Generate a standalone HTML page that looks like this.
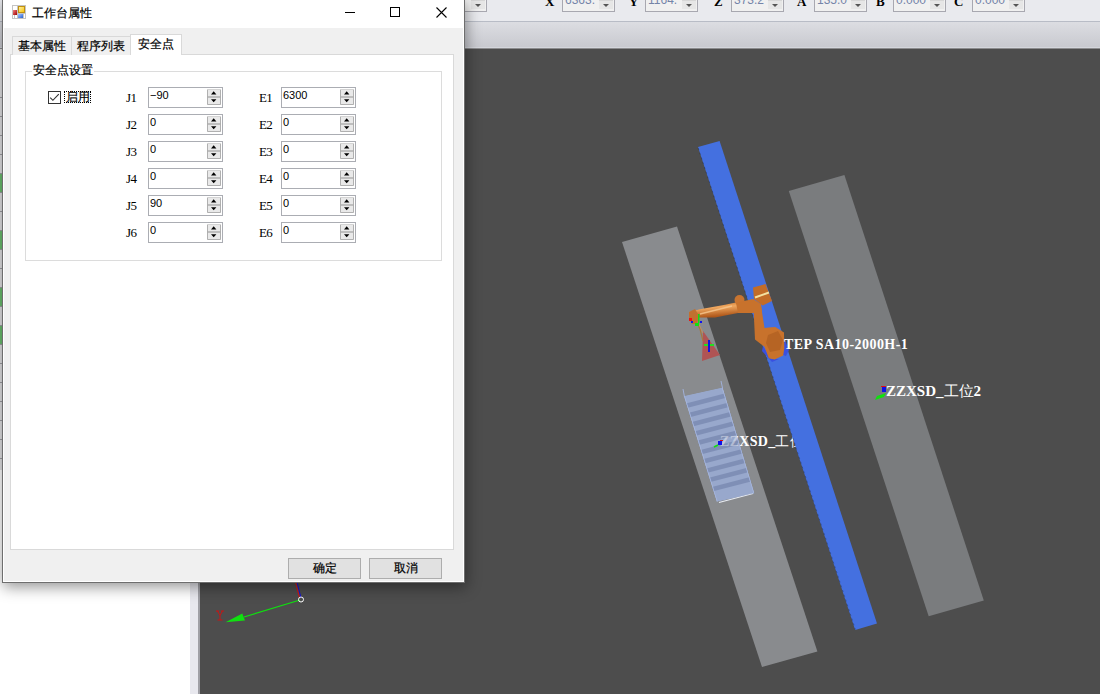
<!DOCTYPE html>
<html><head><meta charset="utf-8"><style>
*{margin:0;padding:0;box-sizing:border-box}
html,body{width:1100px;height:694px;overflow:hidden;background:#fff;font-family:"Liberation Sans",sans-serif;font-size:12px;color:#000}
.a{position:absolute}
.lbl{font-family:"Liberation Serif",serif;font-weight:bold;font-size:13px;color:#000;line-height:13px}
.combo{height:12px;top:0;border:1px solid #a8a8b0;border-top:none;background:#f0f0f0;width:53px;overflow:hidden}
.combo .t{position:absolute;left:2px;top:-6px;font-size:12px;line-height:13px;color:#7484a8}
.combo .btn{position:absolute;right:1px;top:0;width:14px;height:9px;background:#e6e6e6;border-top:1px solid #d6d6d6}
.combo .btn:after{content:"";position:absolute;left:4px;top:3px;border-left:3px solid transparent;border-right:3px solid transparent;border-top:3px solid #555}
.cj{font-size:12px;line-height:14px;white-space:nowrap;-webkit-text-stroke:0.2px #000}
.tab{top:36px;height:19px;border:1px solid #d9d9d9;border-bottom:none;background:#f0f0f0;text-align:center;line-height:19px}
.jl{font-family:"Liberation Serif",serif;font-size:13px;line-height:12px;letter-spacing:-0.6px}
.spin{width:75px;height:21px;border:1px solid #abadb3;background:#fff}
.spin .v{position:absolute;left:1px;top:1px;font-size:11px;line-height:13px}
.spin svg{position:absolute;left:-1px;top:-1px}
.btn2{width:73px;height:21px;border:1px solid #adadad;background:#e1e1e1;text-align:center;line-height:19px}
.w3{font-family:"Liberation Serif",serif;font-weight:bold;color:#fff;white-space:nowrap;line-height:16px}
</style></head><body>
<div class="a" style="left:0;top:0;width:190px;height:694px;background:#fff"></div>
<div class="a" style="left:0;top:0;width:2px;height:470px;background:#e4e4e6"></div>
<div class="a" style="left:0;top:97px;width:2px;height:1px;background:#a0a0a4"></div>
<div class="a" style="left:0;top:116px;width:2px;height:1px;background:#a0a0a4"></div>
<div class="a" style="left:0;top:135px;width:2px;height:1px;background:#a0a0a4"></div>
<div class="a" style="left:0;top:154px;width:2px;height:1px;background:#a0a0a4"></div>
<div class="a" style="left:0;top:173px;width:2px;height:1px;background:#a0a0a4"></div>
<div class="a" style="left:0;top:192px;width:2px;height:1px;background:#a0a0a4"></div>
<div class="a" style="left:0;top:211px;width:2px;height:1px;background:#a0a0a4"></div>
<div class="a" style="left:0;top:230px;width:2px;height:1px;background:#a0a0a4"></div>
<div class="a" style="left:0;top:249px;width:2px;height:1px;background:#a0a0a4"></div>
<div class="a" style="left:0;top:268px;width:2px;height:1px;background:#a0a0a4"></div>
<div class="a" style="left:0;top:287px;width:2px;height:1px;background:#a0a0a4"></div>
<div class="a" style="left:0;top:306px;width:2px;height:1px;background:#a0a0a4"></div>
<div class="a" style="left:0;top:325px;width:2px;height:1px;background:#a0a0a4"></div>
<div class="a" style="left:0;top:344px;width:2px;height:1px;background:#a0a0a4"></div>
<div class="a" style="left:0;top:363px;width:2px;height:1px;background:#a0a0a4"></div>
<div class="a" style="left:0;top:382px;width:2px;height:1px;background:#a0a0a4"></div>
<div class="a" style="left:0;top:401px;width:2px;height:1px;background:#a0a0a4"></div>
<div class="a" style="left:0;top:420px;width:2px;height:1px;background:#a0a0a4"></div>
<div class="a" style="left:0;top:439px;width:2px;height:1px;background:#a0a0a4"></div>
<div class="a" style="left:0;top:458px;width:2px;height:1px;background:#a0a0a4"></div>
<div class="a" style="left:0;top:174px;width:2px;height:18px;background:#6cc070"></div>
<div class="a" style="left:0;top:231px;width:2px;height:18px;background:#6cc070"></div>
<div class="a" style="left:0;top:288px;width:2px;height:18px;background:#6cc070"></div>
<div class="a" style="left:0;top:326px;width:2px;height:18px;background:#6cc070"></div>
<div class="a" style="left:0;top:0;width:1100px;height:21px;background:#e9eaee"></div>
<div class="a" style="left:0;top:21px;width:1100px;height:1px;background:#b8bcc6"></div>
<div class="a" style="left:0;top:22px;width:1100px;height:27px;background:linear-gradient(#dcdde2,#c7c8ce)"></div>
<div class="a" style="left:0;top:47px;width:1100px;height:1px;background:#d4d6dc"></div>
<div class="a" style="left:0;top:48px;width:1100px;height:1px;background:#8c8c8e"></div>
<div class="a" style="left:190px;top:49px;width:8px;height:645px;background:#e8e8ee"></div>
<div class="a" style="left:198px;top:49px;width:2px;height:645px;background:#a0a0a6"></div>
<div class="a combo" style="left:434px;"><div class="t">0</div><div class="btn"></div></div>
<div class="a lbl" style="left:545px;top:-5px">X</div>
<div class="a combo" style="left:562px;"><div class="t">6363.</div><div class="btn"></div></div>
<div class="a lbl" style="left:629px;top:-5px">Y</div>
<div class="a combo" style="left:645px;"><div class="t">1164.</div><div class="btn"></div></div>
<div class="a lbl" style="left:714px;top:-5px">Z</div>
<div class="a combo" style="left:731px;"><div class="t">373.2</div><div class="btn"></div></div>
<div class="a lbl" style="left:797px;top:-5px">A</div>
<div class="a combo" style="left:814px;"><div class="t">135.0</div><div class="btn"></div></div>
<div class="a lbl" style="left:876px;top:-5px">B</div>
<div class="a combo" style="left:893px;"><div class="t">0.000</div><div class="btn"></div></div>
<div class="a lbl" style="left:954px;top:-5px">C</div>
<div class="a combo" style="left:972px;"><div class="t">0.000</div><div class="btn"></div></div>
<div class="a" style="left:200px;top:49px;width:900px;height:645px;background:#4d4d4d;overflow:hidden">
<svg width="900" height="645" viewBox="200 49 900 645" style="position:absolute;left:0;top:0">

<polygon points="622,242 677,226.5 817.4,651.5 762,667" fill="#898b8e"/>
<polygon points="788.8,191 844.4,175 983.8,600.6 928.7,616.3" fill="#7a7c7e"/>
<clipPath id="shc"><polygon points="684,396 722.5,387.5 754.3,493.4 716.9,501.8"/></clipPath>
<g id="shelfg" clip-path="url(#shc)">
<polygon points="684,396 722.5,387.5 754.3,493.4 716.9,501.8" fill="#98a8cc"/>
<line x1="677.0" y1="408.2" x2="757.0" y2="387.4" stroke="#7f8fb6" stroke-width="4.5"/>
<line x1="679.9" y1="417.5" x2="759.9" y2="396.7" stroke="#7f8fb6" stroke-width="4.5"/>
<line x1="682.8" y1="426.7" x2="762.8" y2="405.9" stroke="#7f8fb6" stroke-width="4.5"/>
<line x1="685.6" y1="436.0" x2="765.6" y2="415.2" stroke="#7f8fb6" stroke-width="4.5"/>
<line x1="688.5" y1="445.3" x2="768.5" y2="424.5" stroke="#7f8fb6" stroke-width="4.5"/>
<line x1="691.4" y1="454.6" x2="771.4" y2="433.8" stroke="#7f8fb6" stroke-width="4.5"/>
<line x1="694.3" y1="463.8" x2="774.3" y2="443.0" stroke="#7f8fb6" stroke-width="4.5"/>
<line x1="697.2" y1="473.1" x2="777.2" y2="452.3" stroke="#7f8fb6" stroke-width="4.5"/>
<line x1="700.0" y1="482.4" x2="780.0" y2="461.6" stroke="#7f8fb6" stroke-width="4.5"/>
<line x1="702.9" y1="491.6" x2="782.9" y2="470.8" stroke="#7f8fb6" stroke-width="4.5"/>
<line x1="684" y1="396" x2="716.9" y2="501.8" stroke="#a8b8e0" stroke-width="1.5"/>
<line x1="722.5" y1="387.5" x2="754.3" y2="493.4" stroke="#a8b8e0" stroke-width="1.5"/>
</g>
<line x1="719" y1="502.5" x2="753" y2="493.5" stroke="#e8ecf4" stroke-width="1.2"/>
<line x1="683" y1="389" x2="684.5" y2="397" stroke="#a0b0d8" stroke-width="1"/>
<line x1="721" y1="381" x2="722.5" y2="388" stroke="#a0b0d8" stroke-width="1"/>
<text x="720" y="446" font-family="Liberation Serif" font-weight="bold" font-size="14" letter-spacing="0.3" fill="#fff">ZZXSD_<tspan font-weight="normal">工位</tspan>1</text>
<use href="#shelfg" opacity="0.6"/>
<polygon points="698,147 719.6,141 877,623.6 855.2,630" fill="#4470e0"/>
<line x1="698.2" y1="148" x2="855.4" y2="629.5" stroke="#101830" stroke-width="0.7" stroke-dasharray="2 3" opacity="0.45"/>
<!-- small axes on shelf -->
<rect x="718" y="441" width="4" height="4" fill="#1010e8"/>
<rect x="720" y="440" width="3" height="1" fill="#e01010"/>
<line x1="718" y1="445" x2="714" y2="447" stroke="#10e010" stroke-width="1.6"/>
<!-- axes at station 2 -->
<rect x="882" y="387" width="4" height="5" fill="#1010e8"/>
<rect x="881" y="386" width="5" height="1" fill="#e01010"/>
<path d="M886 393L877 396L875 400L884 397Z" fill="#10e010"/>
<!-- robot -->
<defs>
<linearGradient id="fa" x1="0" y1="0" x2="0.25" y2="1"><stop offset="0" stop-color="#b8621e"/><stop offset="0.45" stop-color="#f0a860"/><stop offset="1" stop-color="#b0581a"/></linearGradient>
</defs>
<polygon points="703,331 720,355 702,361" fill="#b05454"/>
<path d="M694 318L700 329L703 341" stroke="#a8783c" stroke-width="1.2" fill="none"/>
<path d="M697 320L703 333" stroke="#c09060" stroke-width="1" fill="none"/>
<line x1="704" y1="345" x2="714" y2="345" stroke="#20e020" stroke-width="2"/>
<line x1="709" y1="340" x2="709" y2="352" stroke="#1010e0" stroke-width="2"/>
<polygon points="763,346 771,359 779,359 772,362 762,351" fill="#3a50e0"/>
<polygon points="784,338 789,350 786,356 783,355" fill="#3a50e0"/>
<polygon points="753.7,312 761,306 764.5,328 768.8,327.4 775.3,327 784,332.4 784.3,348.3 783.2,355.5 774.6,359.4 768.8,358.3 764.5,346.8 755,339.6" fill="#c8722c"/>
<polygon points="768,335 778,331 783,340 780,350 770,352 766,343" fill="#b66424"/>
<polygon points="689,312 700,309.2 725,304.7 738,302 738,313 715,317.5 692,317.5" fill="url(#fa)"/>
<line x1="700" y1="314" x2="732" y2="306" stroke="#f8c890" stroke-width="1.3" opacity="0.8"/>
<circle cx="739.5" cy="300" r="5" fill="#c87430"/>
<polygon points="736,303 744,301 753,299 761,304 762,313 752,313 738,313" fill="#c8722c"/>
<polygon points="753,287.4 765.5,284.1 772,301 762.7,305.4 754,299" fill="#c26c28"/>
<line x1="755" y1="297.5" x2="769" y2="292.5" stroke="#f4e0a0" stroke-width="2"/>
<polygon points="689,312 695,309 699,316 697,324 692,324 689,318" fill="#c07030"/>
<rect x="689" y="318" width="3" height="3" fill="#f01010"/>
<rect x="691" y="321" width="2" height="2" fill="#1010f0"/>
<rect x="698" y="314" width="1.5" height="9" fill="#10e010"/>
<rect x="695" y="323" width="4" height="3" fill="#10e010"/>
<rect x="700" y="321" width="2" height="2" fill="#1010f0"/>
<text x="784" y="349" font-family="Liberation Serif" font-weight="bold" font-size="14" letter-spacing="0.45" fill="#fff">TEP SA10-2000H-1</text>
<text x="886" y="396" font-family="Liberation Serif" font-weight="bold" font-size="15" fill="#fff">ZZXSD_<tspan font-weight="normal">工位</tspan>2</text>
<!-- world axes -->
<line x1="301" y1="598" x2="296.5" y2="580" stroke="#1010e0" stroke-width="1"/>
<line x1="299.5" y1="598" x2="295" y2="580" stroke="#e01010" stroke-width="1"/>
<line x1="300" y1="600" x2="244" y2="617" stroke="#10e010" stroke-width="1.2"/>
<polygon points="225.5,622.3 242.3,613.6 245,620.5" fill="#10e010"/>
<circle cx="301" cy="599.5" r="2.5" fill="none" stroke="#fff" stroke-width="1"/>
<path d="M216 611H219M221 611H224M217.5 611L220 615.5L222.5 611M220 615.5V620M217.5 620H222.5" stroke="#c81414" stroke-width="1" fill="none"/>

</svg></div>

<div class="a" style="left:2px;top:-1px;width:463px;height:584px;border:1px solid #6e6e6e;background:#f0f0f0;box-shadow:1px 4px 14px rgba(0,0,0,0.42)"></div>
<div class="a" style="left:3px;top:0;width:461px;height:28px;background:#fff"></div>
<div class="a" style="left:3px;top:28px;width:1px;height:553px;background:#fff"></div>
<div class="a" style="left:3px;top:581px;width:461px;height:1px;background:#fff"></div>
<div class="a" style="left:463px;top:28px;width:1px;height:553px;background:#fff"></div>
<svg class="a" style="left:12px;top:5px" width="14" height="14" viewBox="0 0 14 14">
  <rect x="0.5" y="0.5" width="13" height="13" fill="#fff" stroke="#c4c4c4"/>
  <line x1="5.5" y1="0" x2="5.5" y2="14" stroke="#c4c4c4"/>
  <line x1="0" y1="8.5" x2="14" y2="8.5" stroke="#c4c4c4"/>
  <defs><linearGradient id="ig" x1="0" y1="0" x2="1" y2="1"><stop offset="0" stop-color="#fff4b0"/><stop offset="1" stop-color="#f8c000"/></linearGradient>
  <linearGradient id="ib" x1="0" y1="0" x2="1" y2="1"><stop offset="0" stop-color="#a8c8ff"/><stop offset="1" stop-color="#2860d0"/></linearGradient>
  <linearGradient id="ir" x1="0" y1="0" x2="1" y2="1"><stop offset="0" stop-color="#f08080"/><stop offset="1" stop-color="#a00000"/></linearGradient></defs>
  <line x1="2.5" y1="9" x2="2.5" y2="14" stroke="#c4c4c4"/>
  <line x1="11.5" y1="9" x2="11.5" y2="14" stroke="#c4c4c4"/>
  <rect x="6.5" y="1.5" width="6" height="6" fill="url(#ig)" stroke="#c09010" stroke-width="1"/>
  <rect x="1" y="5" width="4" height="5" fill="url(#ir)"/>
  <rect x="6" y="9" width="5" height="4" fill="url(#ib)"/>
</svg>
<div class="a cj" style="left:32px;top:6px;">工作台属性</div>
<div class="a" style="left:345px;top:12px;width:10px;height:1px;background:#000"></div>
<div class="a" style="left:390px;top:7px;width:10px;height:10px;border:1px solid #000"></div>
<svg class="a" style="left:436px;top:7px" width="11" height="11" viewBox="0 0 11 11"><path d="M0.5 0.5L10.5 10.5M10.5 0.5L0.5 10.5" stroke="#000" stroke-width="1.1"/></svg>
<div class="a" style="left:10px;top:54px;width:444px;height:496px;border:1px solid #d9d9d9;background:#fff"></div>
<div class="a tab cj" style="left:12px;width:60px">基本属性</div>
<div class="a tab cj" style="left:71px;width:60px">程序列表</div>
<div class="a tab cj" style="left:130px;top:34px;height:21px;width:52px;background:#fff">安全点</div>
<div class="a" style="left:25px;top:71px;width:417px;height:190px;border:1px solid #dcdcdc"></div>
<div class="a cj" style="left:32px;top:63px;background:#fff;padding:0 1px;line-height:14px">安全点设置</div>
<div class="a" style="left:48px;top:91px;width:13px;height:13px;border:1px solid #333;background:#fff"></div>
<svg class="a" style="left:48px;top:91px" width="13" height="13" viewBox="0 0 13 13"><path d="M2.2 6.6L4.9 9.3L10.8 3.2" fill="none" stroke="#333" stroke-width="1.15"/></svg>
<div class="a" style="left:64px;top:91px;width:27px;height:12px;border:1px dotted #000"></div>
<div class="a cj" style="left:66px;top:90px;line-height:14px">启用</div>
<div class="a jl" style="left:126px;top:92px">J1</div>
<div class="a spin" style="left:148px;top:87px"><div class="v">−90</div><svg width="75" height="21" viewBox="0 0 75 21"><rect x="59" y="2" width="14" height="16" fill="#e9e9e9"/><path d="M59.5 2V17.5H72.5V2" fill="none" stroke="#b0b0b0"/><path d="M59 2.5H73" stroke="#d4d4d4"/><path d="M59 10H73" stroke="#acacac" stroke-width="1.4"/><path d="M63 7.4H68.4L65.7 4.2Z" fill="#000"/><path d="M63 12.2H68.4L65.7 15.2Z" fill="#000"/></svg></div>
<div class="a jl" style="left:259px;top:92px">E1</div>
<div class="a spin" style="left:281px;top:87px"><div class="v">6300</div><svg width="75" height="21" viewBox="0 0 75 21"><rect x="59" y="2" width="14" height="16" fill="#e9e9e9"/><path d="M59.5 2V17.5H72.5V2" fill="none" stroke="#b0b0b0"/><path d="M59 2.5H73" stroke="#d4d4d4"/><path d="M59 10H73" stroke="#acacac" stroke-width="1.4"/><path d="M63 7.4H68.4L65.7 4.2Z" fill="#000"/><path d="M63 12.2H68.4L65.7 15.2Z" fill="#000"/></svg></div>
<div class="a jl" style="left:126px;top:119px">J2</div>
<div class="a spin" style="left:148px;top:114px"><div class="v">0</div><svg width="75" height="21" viewBox="0 0 75 21"><rect x="59" y="2" width="14" height="16" fill="#e9e9e9"/><path d="M59.5 2V17.5H72.5V2" fill="none" stroke="#b0b0b0"/><path d="M59 2.5H73" stroke="#d4d4d4"/><path d="M59 10H73" stroke="#acacac" stroke-width="1.4"/><path d="M63 7.4H68.4L65.7 4.2Z" fill="#000"/><path d="M63 12.2H68.4L65.7 15.2Z" fill="#000"/></svg></div>
<div class="a jl" style="left:259px;top:119px">E2</div>
<div class="a spin" style="left:281px;top:114px"><div class="v">0</div><svg width="75" height="21" viewBox="0 0 75 21"><rect x="59" y="2" width="14" height="16" fill="#e9e9e9"/><path d="M59.5 2V17.5H72.5V2" fill="none" stroke="#b0b0b0"/><path d="M59 2.5H73" stroke="#d4d4d4"/><path d="M59 10H73" stroke="#acacac" stroke-width="1.4"/><path d="M63 7.4H68.4L65.7 4.2Z" fill="#000"/><path d="M63 12.2H68.4L65.7 15.2Z" fill="#000"/></svg></div>
<div class="a jl" style="left:126px;top:146px">J3</div>
<div class="a spin" style="left:148px;top:141px"><div class="v">0</div><svg width="75" height="21" viewBox="0 0 75 21"><rect x="59" y="2" width="14" height="16" fill="#e9e9e9"/><path d="M59.5 2V17.5H72.5V2" fill="none" stroke="#b0b0b0"/><path d="M59 2.5H73" stroke="#d4d4d4"/><path d="M59 10H73" stroke="#acacac" stroke-width="1.4"/><path d="M63 7.4H68.4L65.7 4.2Z" fill="#000"/><path d="M63 12.2H68.4L65.7 15.2Z" fill="#000"/></svg></div>
<div class="a jl" style="left:259px;top:146px">E3</div>
<div class="a spin" style="left:281px;top:141px"><div class="v">0</div><svg width="75" height="21" viewBox="0 0 75 21"><rect x="59" y="2" width="14" height="16" fill="#e9e9e9"/><path d="M59.5 2V17.5H72.5V2" fill="none" stroke="#b0b0b0"/><path d="M59 2.5H73" stroke="#d4d4d4"/><path d="M59 10H73" stroke="#acacac" stroke-width="1.4"/><path d="M63 7.4H68.4L65.7 4.2Z" fill="#000"/><path d="M63 12.2H68.4L65.7 15.2Z" fill="#000"/></svg></div>
<div class="a jl" style="left:126px;top:173px">J4</div>
<div class="a spin" style="left:148px;top:168px"><div class="v">0</div><svg width="75" height="21" viewBox="0 0 75 21"><rect x="59" y="2" width="14" height="16" fill="#e9e9e9"/><path d="M59.5 2V17.5H72.5V2" fill="none" stroke="#b0b0b0"/><path d="M59 2.5H73" stroke="#d4d4d4"/><path d="M59 10H73" stroke="#acacac" stroke-width="1.4"/><path d="M63 7.4H68.4L65.7 4.2Z" fill="#000"/><path d="M63 12.2H68.4L65.7 15.2Z" fill="#000"/></svg></div>
<div class="a jl" style="left:259px;top:173px">E4</div>
<div class="a spin" style="left:281px;top:168px"><div class="v">0</div><svg width="75" height="21" viewBox="0 0 75 21"><rect x="59" y="2" width="14" height="16" fill="#e9e9e9"/><path d="M59.5 2V17.5H72.5V2" fill="none" stroke="#b0b0b0"/><path d="M59 2.5H73" stroke="#d4d4d4"/><path d="M59 10H73" stroke="#acacac" stroke-width="1.4"/><path d="M63 7.4H68.4L65.7 4.2Z" fill="#000"/><path d="M63 12.2H68.4L65.7 15.2Z" fill="#000"/></svg></div>
<div class="a jl" style="left:126px;top:200px">J5</div>
<div class="a spin" style="left:148px;top:195px"><div class="v">90</div><svg width="75" height="21" viewBox="0 0 75 21"><rect x="59" y="2" width="14" height="16" fill="#e9e9e9"/><path d="M59.5 2V17.5H72.5V2" fill="none" stroke="#b0b0b0"/><path d="M59 2.5H73" stroke="#d4d4d4"/><path d="M59 10H73" stroke="#acacac" stroke-width="1.4"/><path d="M63 7.4H68.4L65.7 4.2Z" fill="#000"/><path d="M63 12.2H68.4L65.7 15.2Z" fill="#000"/></svg></div>
<div class="a jl" style="left:259px;top:200px">E5</div>
<div class="a spin" style="left:281px;top:195px"><div class="v">0</div><svg width="75" height="21" viewBox="0 0 75 21"><rect x="59" y="2" width="14" height="16" fill="#e9e9e9"/><path d="M59.5 2V17.5H72.5V2" fill="none" stroke="#b0b0b0"/><path d="M59 2.5H73" stroke="#d4d4d4"/><path d="M59 10H73" stroke="#acacac" stroke-width="1.4"/><path d="M63 7.4H68.4L65.7 4.2Z" fill="#000"/><path d="M63 12.2H68.4L65.7 15.2Z" fill="#000"/></svg></div>
<div class="a jl" style="left:126px;top:227px">J6</div>
<div class="a spin" style="left:148px;top:222px"><div class="v">0</div><svg width="75" height="21" viewBox="0 0 75 21"><rect x="59" y="2" width="14" height="16" fill="#e9e9e9"/><path d="M59.5 2V17.5H72.5V2" fill="none" stroke="#b0b0b0"/><path d="M59 2.5H73" stroke="#d4d4d4"/><path d="M59 10H73" stroke="#acacac" stroke-width="1.4"/><path d="M63 7.4H68.4L65.7 4.2Z" fill="#000"/><path d="M63 12.2H68.4L65.7 15.2Z" fill="#000"/></svg></div>
<div class="a jl" style="left:259px;top:227px">E6</div>
<div class="a spin" style="left:281px;top:222px"><div class="v">0</div><svg width="75" height="21" viewBox="0 0 75 21"><rect x="59" y="2" width="14" height="16" fill="#e9e9e9"/><path d="M59.5 2V17.5H72.5V2" fill="none" stroke="#b0b0b0"/><path d="M59 2.5H73" stroke="#d4d4d4"/><path d="M59 10H73" stroke="#acacac" stroke-width="1.4"/><path d="M63 7.4H68.4L65.7 4.2Z" fill="#000"/><path d="M63 12.2H68.4L65.7 15.2Z" fill="#000"/></svg></div>
<div class="a btn2 cj" style="left:288px;top:558px">确定</div>
<div class="a btn2 cj" style="left:369px;top:558px">取消</div>
</body></html>
